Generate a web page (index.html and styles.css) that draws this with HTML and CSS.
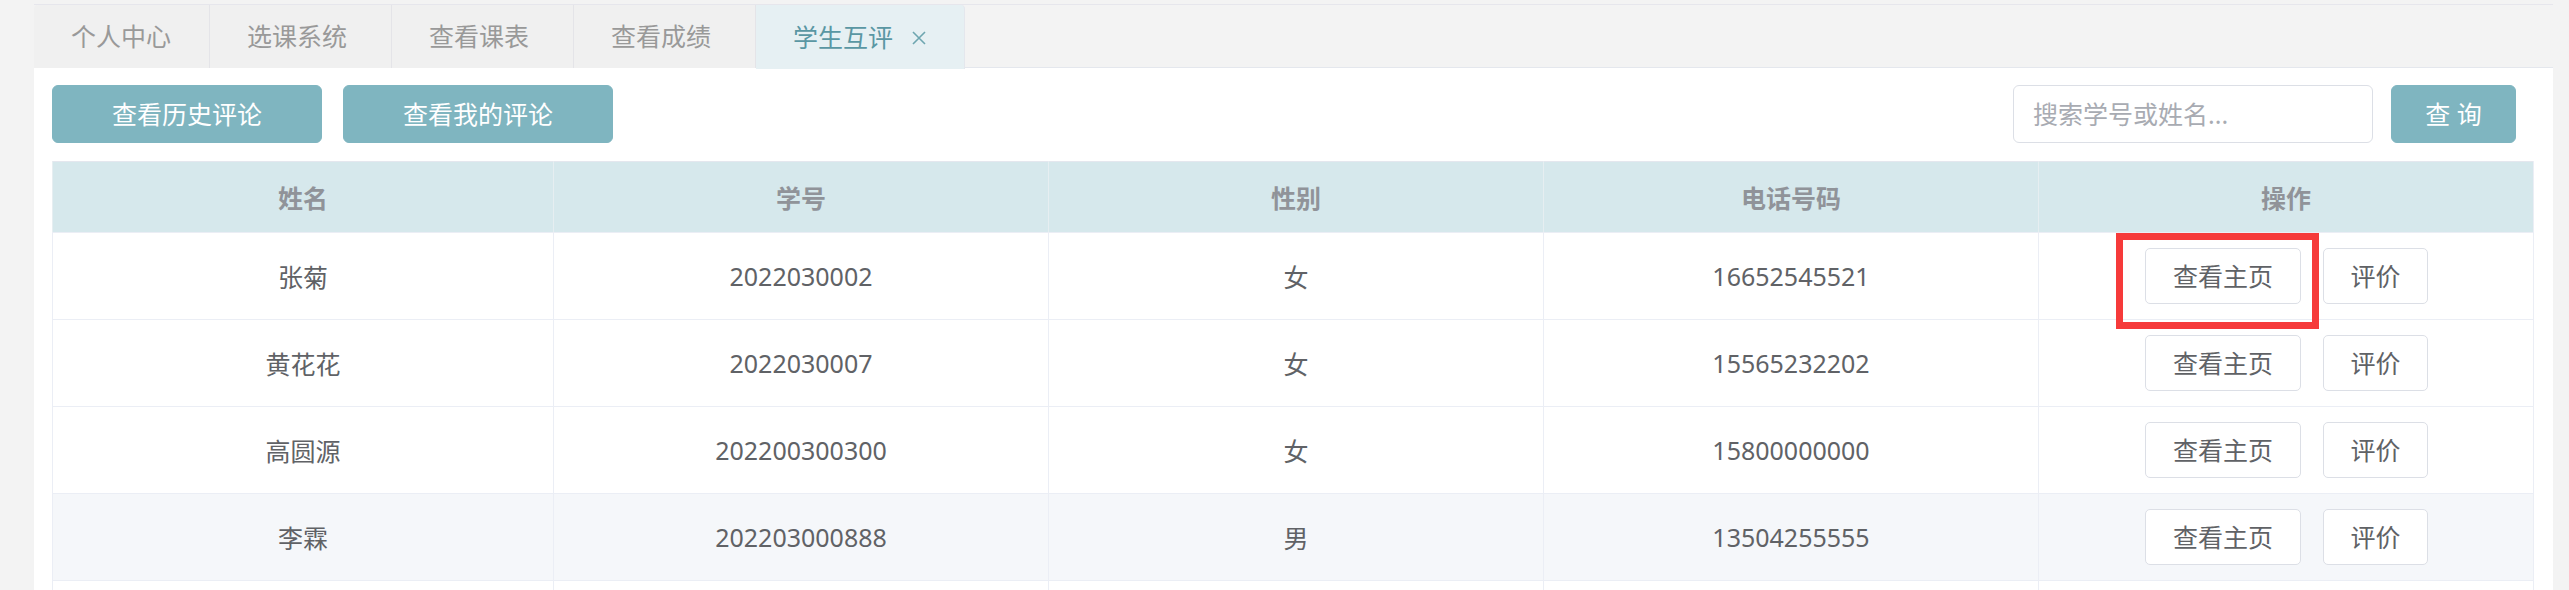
FILE: index.html
```html
<!DOCTYPE html>
<html lang="zh-CN">
<head>
<meta charset="utf-8">
<title>学生互评</title>
<link rel="stylesheet" href="styles.css">
</head>
<body>
<div class="app">
  <div class="tabs">
    <div class="tab tab-first">个人中心</div>
    <div class="tab">选课系统</div>
    <div class="tab">查看课表</div>
    <div class="tab">查看成绩</div>
    <div class="tab tab-active">学生互评<svg class="tab-close" width="14" height="14" viewBox="0 0 14 14" aria-label="关闭"><path d="M1 1 L13 13 M13 1 L1 13" /></svg></div>
  </div>
  <div class="panel">
    <div class="toolbar">
      <div class="toolbar-left">
        <button class="btn btn-primary btn-wide">查看历史评论</button>
        <button class="btn btn-primary btn-wide">查看我的评论</button>
      </div>
      <div class="toolbar-right">
        <input class="search" type="text" placeholder="搜索学号或姓名...">
        <button class="btn btn-primary btn-query">查 询</button>
      </div>
    </div>
    <table class="grid">
      <colgroup>
        <col class="col-first">
        <col>
        <col>
        <col>
        <col>
      </colgroup>
      <thead>
        <tr><th>姓名</th><th>学号</th><th>性别</th><th>电话号码</th><th>操作</th></tr>
      </thead>
      <tbody>
        <tr>
          <td>张菊</td><td>2022030002</td><td>女</td><td>16652545521</td>
          <td><div class="ops"><span class="mark-wrap"><button class="btn btn-plain btn-home">查看主页</button><span class="mark"></span></span><button class="btn btn-plain btn-rate">评价</button></div></td>
        </tr>
        <tr>
          <td>黄花花</td><td>2022030007</td><td>女</td><td>15565232202</td>
          <td><div class="ops"><button class="btn btn-plain btn-home">查看主页</button><button class="btn btn-plain btn-rate">评价</button></div></td>
        </tr>
        <tr>
          <td>高圆源</td><td>202200300300</td><td>女</td><td>15800000000</td>
          <td><div class="ops"><button class="btn btn-plain btn-home">查看主页</button><button class="btn btn-plain btn-rate">评价</button></div></td>
        </tr>
        <tr class="row-hover">
          <td>李霖</td><td>202203000888</td><td>男</td><td>13504255555</td>
          <td><div class="ops"><button class="btn btn-plain btn-home">查看主页</button><button class="btn btn-plain btn-rate">评价</button></div></td>
        </tr>
        <tr>
          <td></td><td></td><td></td><td></td><td></td>
        </tr>
      </tbody>
    </table>
  </div>
</div>
</body>
</html>
```

FILE: styles.css
```css
* {
  box-sizing: border-box;
}

html, body {
  margin: 0;
  padding: 0;
}

body {
  width: 2569px;
  height: 590px;
  overflow: hidden;
  background: #f3f3f3;
  font-family: "Noto Sans", "Noto Sans CJK SC", sans-serif;
  font-size: 25px;
  color: #606266;
}

.app {
  padding: 4px 16px 0 34px;
}

.tabs {
  display: flex;
  height: 64px;
  border-top: 1px solid #e6e6ec;
  border-bottom: 1px solid #e4e7ed;
}

.tab {
  display: flex;
  align-items: center;
  height: 63px;
  padding: 0 44px 0 37px;
  background: #f0f0f0;
  border-right: 1px solid #e4e4e8;
  color: #999999;
  line-height: 1;
  white-space: nowrap;
}

.tab-first {
  padding: 0 38px 0 37px;
  border-top-left-radius: 4px;
}

.tab-active {
  padding: 0 38px 0 37px;
  height: 64px;
  background: #e6f0f3;
  color: #5a97a3;
  border-top-right-radius: 4px;
  border-right: 1px solid #e4e7ed;
}

.tab-close {
  margin-left: 19px;
  margin-top: 2px;
  stroke: #6ea6b0;
  stroke-width: 1.6;
  fill: none;
}

.panel {
  background: #ffffff;
  padding: 17px 19px 0 18px;
  height: 522px;
}

.toolbar {
  display: flex;
  justify-content: space-between;
  align-items: center;
  height: 58px;
  margin-bottom: 18px;
  padding-right: 18px;
}

.toolbar-left,
.toolbar-right {
  display: flex;
  align-items: center;
}

.toolbar-left {
  gap: 21px;
}

.btn {
  display: inline-flex;
  align-items: center;
  justify-content: center;
  font-family: inherit;
  font-size: 25px;
  line-height: 1;
  padding: 0;
  cursor: pointer;
  white-space: nowrap;
}

.btn-primary {
  background: #7fb5c0;
  border: 1px solid #7fb5c0;
  color: #ffffff;
  border-radius: 6px;
  height: 58px;
}

.btn-wide {
  width: 270px;
}

.btn-query {
  width: 125px;
}

.search {
  width: 360px;
  height: 58px;
  margin-right: 18px;
  padding: 0 19px;
  border: 1px solid #dcdfe6;
  border-radius: 6px;
  font-family: inherit;
  font-size: 25px;
  color: #606266;
  outline: none;
}

.search::placeholder {
  color: #a8abb2;
}

.grid {
  width: 2482px;
  border-collapse: collapse;
  table-layout: fixed;
  border-left: 1px solid #ebeef5;
  border-right: 1px solid #ebeef5;
  border-top: 1px solid #e4e7ee;
}

.col-first {
  width: 501px;
}

.grid th {
  height: 71px;
  background: #d6e8ec;
  color: #909399;
  font-weight: 700;
  text-align: center;
  border-left: 1px solid #e6eef1;
  border-bottom: 1px solid #ebeef5;
  padding: 0;
}

.grid td {
  height: 87px;
  text-align: center;
  color: #606266;
  border-left: 1px solid #ebeef5;
  border-bottom: 1px solid #ebeef5;
  padding: 0;
  background: #ffffff;
}

.grid .row-hover td {
  background: #f5f7fa;
}

.ops {
  display: flex;
  justify-content: center;
  align-items: center;
  gap: 22px;
  padding-left: 1px;
}

.btn-plain {
  height: 56px;
  background: #ffffff;
  border: 1px solid #dcdfe6;
  border-radius: 5px;
  color: #606266;
}

.btn-home {
  width: 156px;
}

.btn-rate {
  width: 105px;
}

.mark-wrap {
  position: relative;
  display: inline-flex;
}

.mark {
  position: absolute;
  left: -29px;
  top: -15px;
  right: -18px;
  bottom: -25px;
  border: 7px solid #f63a3a;
  pointer-events: none;
}
```
